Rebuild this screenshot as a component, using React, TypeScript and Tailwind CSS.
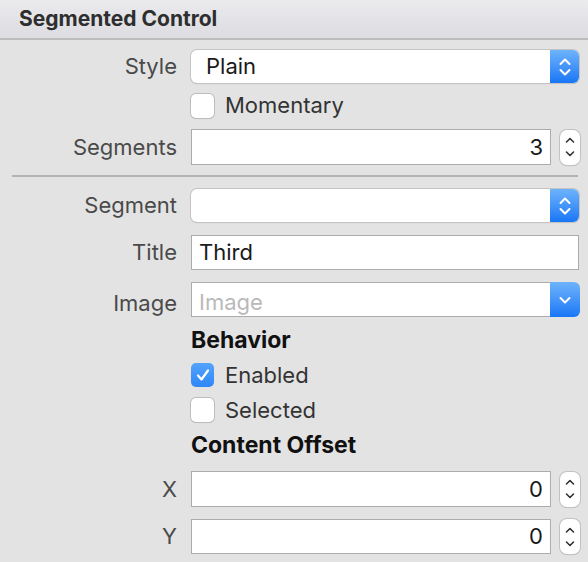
import React from "react";

const font = { fontFamily: "Inter, 'Noto Sans', sans-serif" };

function UpDown({ color = "white" }: { color?: string }) {
  return (
    <svg width="14" height="22" viewBox="0 0 14 22" fill="none">
      <path d="M2.5 8 L7 3.5 L11.5 8" stroke={color} strokeWidth="2" strokeLinecap="round" strokeLinejoin="round" />
      <path d="M2.5 14 L7 18.5 L11.5 14" stroke={color} strokeWidth="2" strokeLinecap="round" strokeLinejoin="round" />
    </svg>
  );
}

function Popup({ text }: { text?: string }) {
  return (
    <div className="flex h-[33px] w-[388px] rounded-[6px] bg-white shadow-[0_0_0_1px_#c4c4c4,0_1px_1px_rgba(0,0,0,0.18)] overflow-hidden">
      <div className="flex-1 flex items-center pl-[15px] text-[22px] text-[#1a1a1a]">{text}</div>
      <div className="w-[29px] flex items-center justify-center bg-gradient-to-b from-[#6db3fb] to-[#1676f6]">
        <UpDown />
      </div>
    </div>
  );
}

function Stepper() {
  return (
    <div className="ml-[9px] w-[20px] h-[35px] rounded-[7px] bg-white shadow-[0_0_0_1px_#c2c2c2,0_1px_1px_rgba(0,0,0,0.15)] flex items-center justify-center">
      <svg width="12" height="26" viewBox="0 0 12 26" fill="none">
        <path d="M2.5 8 L6 4.5 L9.5 8" stroke="#333" strokeWidth="1.6" strokeLinecap="round" strokeLinejoin="round" />
        <path d="M2.5 18 L6 21.5 L9.5 18" stroke="#333" strokeWidth="1.6" strokeLinecap="round" strokeLinejoin="round" />
      </svg>
    </div>
  );
}

function NumField({ value, h = 36 }: { value: string; h?: number }) {
  return (
    <div className="flex items-center">
      <div
        className={`w-[360px] ${h === 36 ? "h-[36px]" : "h-[35px]"} bg-white border border-[#acacac] flex items-center justify-end pr-[7px] text-[22px] text-[#1a1a1a]`}
      >
        {value}
      </div>
      <Stepper />
    </div>
  );
}

function Checkbox({ checked }: { checked?: boolean }) {
  if (checked) {
    return (
      <div className="w-[23px] h-[24px] rounded-[5px] bg-gradient-to-b from-[#52a3fb] to-[#2f87f7] flex items-center justify-center">
        <svg width="16" height="16" viewBox="0 0 16 16" fill="none">
          <path d="M3 8.5 L6.5 12.5 L13 3.5" stroke="white" strokeWidth="2.2" strokeLinecap="round" strokeLinejoin="round" />
        </svg>
      </div>
    );
  }
  return (
    <div className="w-[23px] h-[24px] rounded-[5px] bg-white shadow-[0_0_0_1px_#bdbdbd,0_1px_1px_rgba(0,0,0,0.15)]" />
  );
}

function Row({
  label,
  children,
  className = "",
  labelClass = "",
}: {
  label?: string;
  children: React.ReactNode;
  className?: string;
  labelClass?: string;
}) {
  return (
    <div className={`flex items-center ${className}`}>
      <div className={`w-[177px] text-right text-[22px] text-[#4a4a4a] ${labelClass}`}>{label}</div>
      <div className="ml-[14px]">{children}</div>
    </div>
  );
}

export default function App() {
  return (
    <div className="w-[588px] h-[562px] bg-[#e3e3e3] overflow-hidden" style={font}>
      <div className="h-[40px] border-b-2 border-[#bcbcbc] bg-gradient-to-b from-[#ebebee] to-[#dcdce1] flex items-center pl-[19px]">
        <span className="text-[21px] font-bold text-[#2e2e2e]">Segmented Control</span>
      </div>

      <Row label="Style" className="mt-[10px]">
        <Popup text="Plain" />
      </Row>

      <Row className="mt-[11px]">
        <div className="flex items-center h-[23px]">
          <Checkbox />
          <span className="ml-[11px] text-[22px] text-[#333]">Momentary</span>
        </div>
      </Row>

      <Row label="Segments" className="mt-[12px]">
        <NumField value="3" />
      </Row>

      <div className="mt-[10px] ml-[12px] w-[566px] h-[2px] bg-[#b3b3b3]" />

      <Row label="Segment" className="mt-[12px]">
        <Popup />
      </Row>

      <Row label="Title" className="mt-[13px]">
        <div className="w-[388px] h-[35px] bg-white border border-[#acacac] flex items-center pl-[7px] text-[22px] text-[#1a1a1a]">
          Third
        </div>
      </Row>

      <Row label="Image" className="mt-[12px]" labelClass="translate-y-[4px]">
        <div className="flex w-[389px] h-[35px]">
          <div className="flex-1 bg-white border border-[#acacac] border-r-0 flex items-center pl-[7px] pt-[5px] text-[22px] text-[#b9b9b9]">
            Image
          </div>
          <div className="w-[30px] rounded-r-[6px] flex items-center justify-center bg-gradient-to-b from-[#6db3fb] to-[#1676f6]">
            <svg width="14" height="10" viewBox="0 0 14 10" fill="none">
              <path d="M2.5 3 L7 7.5 L11.5 3" stroke="white" strokeWidth="2" strokeLinecap="round" strokeLinejoin="round" />
            </svg>
          </div>
        </div>
      </Row>

      <div className="ml-[191px] mt-[9px] h-[28px] flex items-center text-[23px] font-bold text-[#111]">Behavior</div>

      <div className="ml-[191px] mt-[9px] flex items-center h-[24px]">
        <Checkbox checked />
        <span className="ml-[11px] text-[22px] text-[#333]">Enabled</span>
      </div>

      <div className="ml-[191px] mt-[11px] flex items-center h-[24px]">
        <Checkbox />
        <span className="ml-[11px] text-[22px] text-[#333]">Selected</span>
      </div>

      <div className="ml-[191px] mt-[9px] h-[29px] flex items-center text-[23px] font-bold text-[#111]">Content Offset</div>

      <Row label="X" className="mt-[11px]">
        <NumField value="0" />
      </Row>

      <Row label="Y" className="mt-[12px]">
        <NumField value="0" h={35} />
      </Row>
    </div>
  );
}
